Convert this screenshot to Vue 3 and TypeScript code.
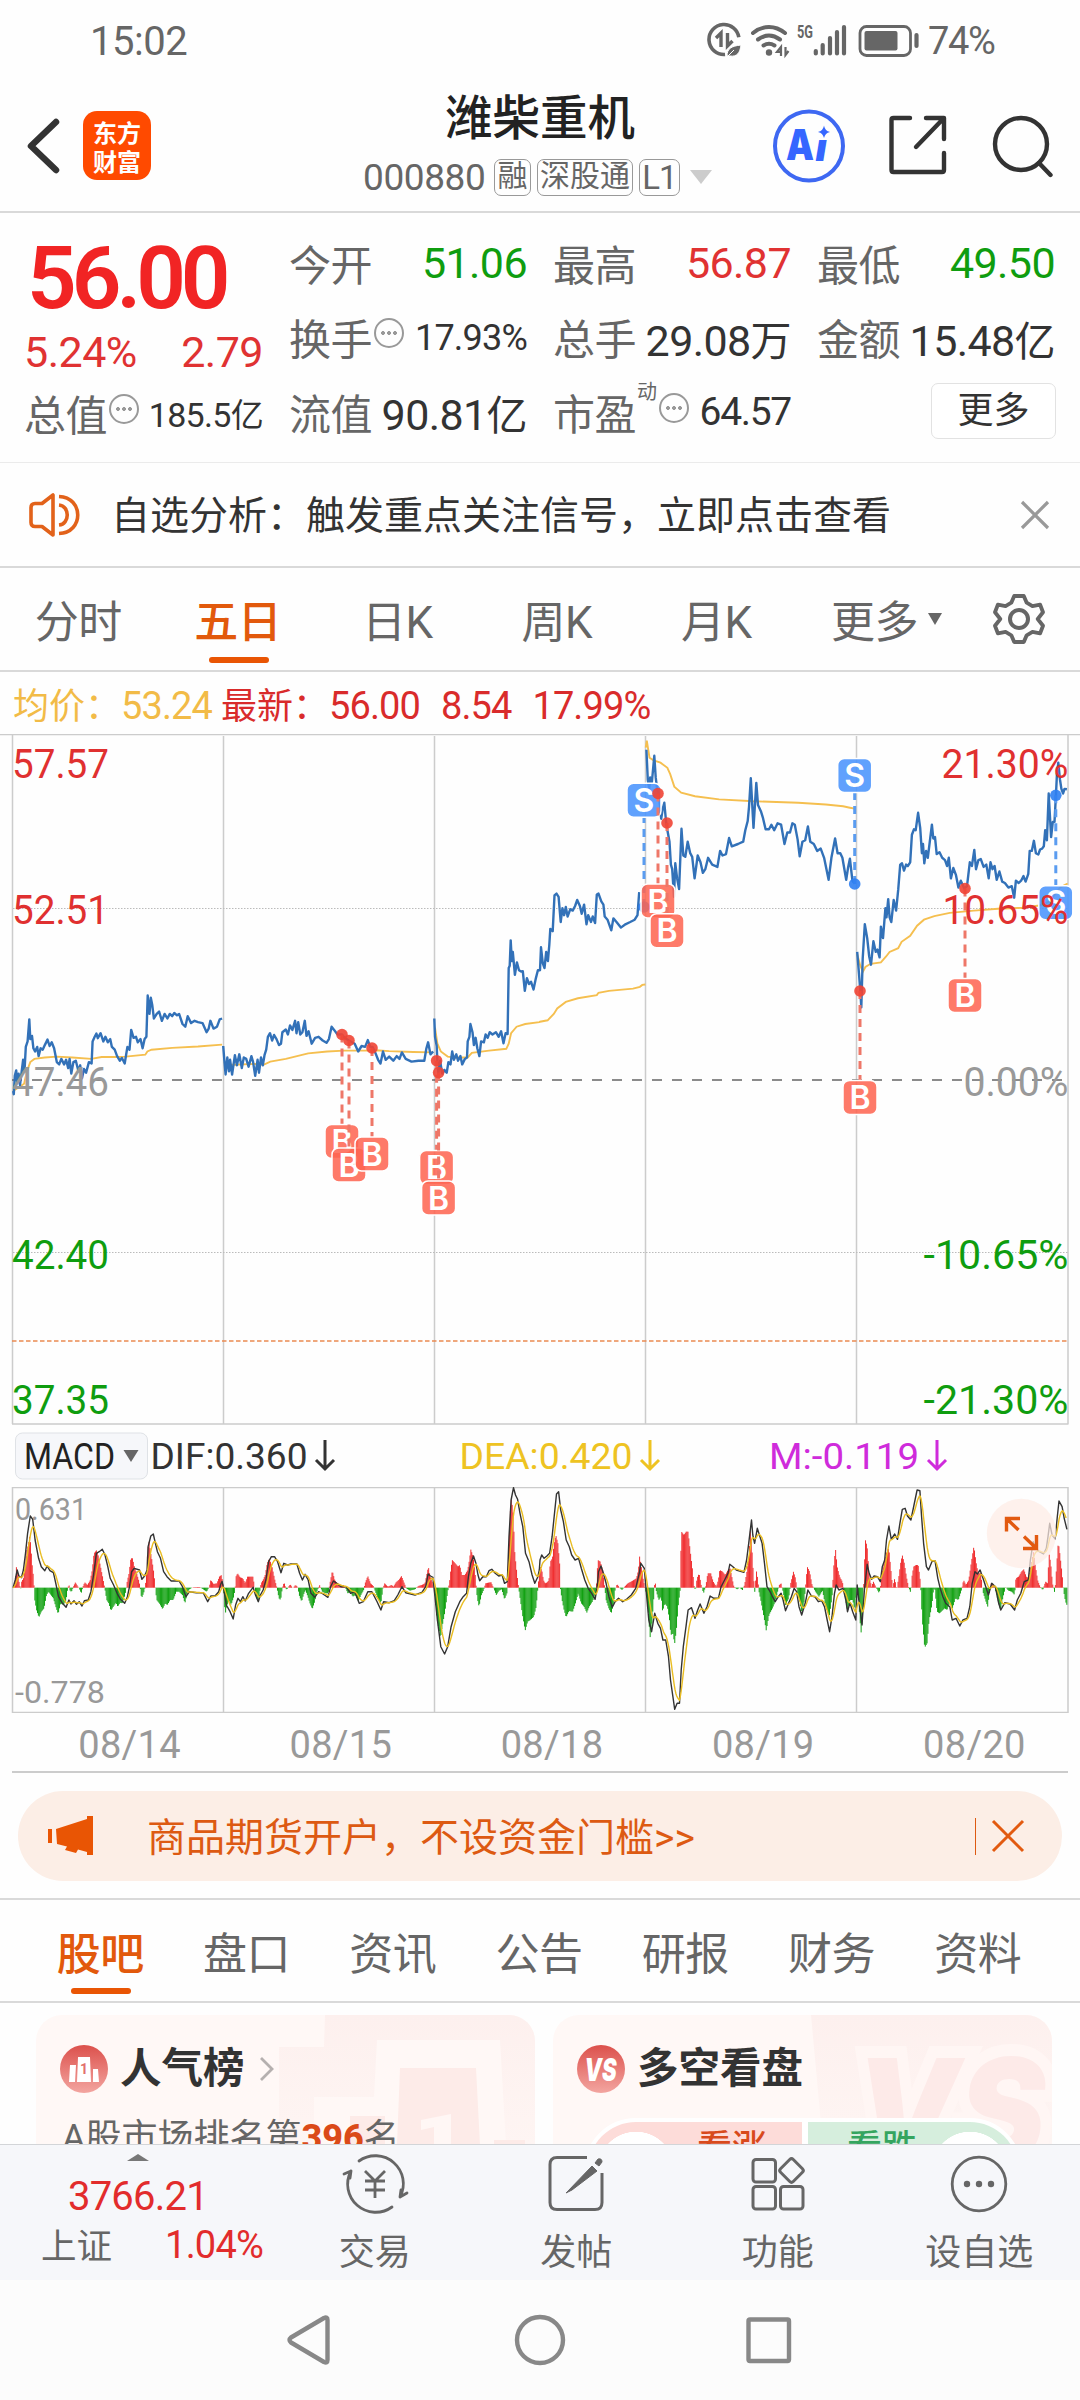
<script setup lang="ts">
type Pt = [number, number]
interface Plot { ox: number; oy: number; sx: number; sy: number }
interface Mark { kind: 'B' | 'S'; x: number; y: number; dot: number }

// Sample sheets are stored in plotter units; each half of the canvas has its own origin.
const priceL: Plot = { ox: 0, oy: -14, sx: 540 / 1568, sy: 720 / 1568 }
const priceR: Plot = { ...priceL, ox: 540 }
const macdL: Plot = { ox: 0, oy: -67, sx: 540 / 1568, sy: 1 / 3 }
const macdR: Plot = { ...macdL, ox: 540 }

const parse = (s: string, p: Plot): Pt[] =>
  s.trim().split(/\s+/).map((c) => {
    const [x, y] = c.split(',').map(Number)
    return [p.ox + x * p.sx, p.oy + y * p.sy] as Pt
  })
const line = (pts: Pt[]): string => pts.map(([x, y]) => `${x.toFixed(1)},${y.toFixed(1)}`).join(' ')

const price: string[] = [
  line(parse('38,808 40,815 43,775 47,763 50,790 54,770 58,795 62,770 67,740 71,765 75,712 80,700 85,652 88,695 93,688 97,715 102,722 108,712 112,732 118,715 124,718 130,708 138,696 144,710 150,702 157,715 165,745 172,750 178,738 186,750 192,740 198,758 202,738 207,770 213,745 220,742 228,765 233,752 238,780 244,760 250,768 258,745 266,748 269,700 275,690 280,683 284,693 292,682 300,700 306,690 313,702 320,695 325,712 333,718 340,732 348,742 354,736 362,748 370,712 376,718 381,675 388,692 395,690 400,702 408,695 414,715 420,695 425,690 429,600 434,640 438,605 442,620 447,650 455,640 462,635 470,655 478,640 486,650 493,640 500,645 506,638 514,643 520,640 530,662 538,668 545,645 555,660 565,655 575,658 588,660 600,680 606,672 611,655 620,672 630,668 638,652 645,650', priceL)),
  line(parse('648,710 652,745 655,772 660,735 665,765 668,740 674,772 682,730 688,752 695,728 702,758 708,735 715,738 722,755 730,732 735,745 741,775 748,740 752,768 758,735 763,752 768,730 773,718 778,690 784,682 790,698 796,686 803,695 810,708 816,705 820,680 830,674 836,685 842,665 849,675 857,655 861,682 866,658 872,685 878,680 885,655 890,688 896,678 905,705 915,692 925,690 937,698 948,703 955,695 963,668 970,675 980,685 993,685 1000,692 1013,698 1030,705 1040,722 1050,710 1060,712 1068,697 1075,712 1082,712 1090,725 1098,740 1105,748 1112,722 1120,740 1130,733 1142,742 1152,732 1160,738 1167,724 1178,738 1195,744 1215,742 1232,742 1238,715 1243,702 1250,728 1258,722', priceL)),
  line([
    ...parse('1261,650 1263,690 1268,710 1270,745 1273,770 1278,742 1284,770 1290,762 1297,768 1302,745 1308,750 1313,722 1318,740 1325,728 1330,742 1337,732 1342,750 1350,738 1356,735 1358,700 1363,690 1366,662 1372,680 1376,708 1381,692 1386,715 1392,732 1397,700 1405,702 1410,685 1416,692 1422,680 1430,685 1440,680 1448,690 1455,678 1462,704 1468,682 1474,684 1477,540 1480,535 1483,480 1486,525 1489,505 1495,555 1501,528 1507,545 1513,548 1518,547 1524,590 1530,562 1536,575 1542,570 1549,587 1556,562 1562,545 1566,545', priceL),
    ...parse('0,545 3,495 8,530 13,540 18,505 23,525 27,490 30,455 37,460 42,382 48,378 54,385 60,440 65,410 70,425 75,407 80,428 88,412 95,415 102,405 108,392 116,405 121,422 128,402 135,445 140,425 148,440 153,428 160,442 165,380 170,378 178,395 184,402 188,428 196,435 207,458 213,432 222,440 235,452 248,445 262,440 275,435 283,425 288,375', priceR),
  ]),
  line(parse('309,65 313,130 317,150 320,125 325,135 332,78 336,125 340,150 345,160 352,215 356,195 361,180 366,220 370,240 376,265 380,315 384,325 389,385 393,312 398,345 404,368 411,237 416,295 422,298 429,265 436,290 442,298 449,345 458,295 466,310 473,333 480,325 488,300 500,315 515,320 523,285 530,295 540,292 549,257 557,275 575,270 590,265 596,240 603,220 607,190 612,127 620,235 628,137 633,185 642,200 647,212 655,238 665,238 672,228 680,240 690,225 700,228 710,270 718,245 726,245 733,225 740,228 748,260 754,297 762,265 770,262 778,232 785,265 795,270 805,285 815,280 825,300 838,348 846,300 857,258 864,290 872,290 878,300 889,348 895,320 900,302 907,350 914,357', priceR)),
  line(parse('921,505 926,550 930,590 933,626 937,520 943,445 950,475 956,515 961,533 968,482 975,505 980,500 986,517 990,450 996,475 1003,410 1006,430 1011,390 1015,430 1020,440 1027,392 1034,415 1040,370 1046,315 1051,312 1057,328 1063,315 1068,318 1075,310 1080,250 1086,238 1091,240 1098,202 1104,235 1109,290 1112,270 1116,312 1121,285 1126,300 1132,265 1138,228 1142,258 1147,255 1152,292 1160,288 1168,300 1176,305 1182,318 1187,300 1193,345 1200,322 1208,338 1215,365 1222,350 1232,367 1240,362 1248,310 1254,318 1261,283 1266,325 1273,305 1280,303 1288,320 1296,315 1303,345 1308,310 1314,325 1320,318 1326,348 1334,330 1342,352 1350,355 1360,365 1370,362 1377,387 1382,350 1390,355 1397,350 1404,340 1410,352 1418,335 1422,285 1428,285 1434,263 1440,290 1447,293 1452,282 1458,280 1463,275 1467,240 1472,262 1477,160 1484,255 1489,222 1494,222 1498,165 1501,120 1505,93 1510,130 1514,150 1519,160 1523,150 1530,151', priceR)),
]

const average: string[] = [
  line(parse('38,808 55,800 70,792 78,765 88,745 100,738 130,735 165,733 210,735 265,738 295,734 340,734 365,733 422,729 428,722 440,718 500,714 575,711 645,707', priceL)),
  line(parse('650,745 662,750 680,751 740,749 765,751 785,744 830,738 895,726 950,722 1000,720 1060,720 1090,719 1130,721 1200,723 1256,724', priceL)),
  line([
    ...parse('1263,670 1270,705 1280,722 1300,733 1320,735 1358,735 1370,725 1420,720 1470,716 1477,705 1484,682 1500,668 1525,662 1566,658', priceL),
    ...parse('0,657 22,654 40,640 50,628 75,614 110,606 165,599 170,594 200,590 270,585 290,581 297,577 306,576', priceR),
  ]),
  line(parse('307,60 310,45 318,82 330,88 350,93 370,104 378,118 390,145 410,158 450,166 520,173 620,177 750,180 830,184 880,188 900,191 914,193', priceR)),
  line(parse('921,510 930,535 938,548 945,538 960,531 990,528 1005,515 1015,505 1040,497 1050,483 1075,470 1095,448 1115,435 1145,427 1190,420 1260,415 1330,411 1400,409 1450,404 1480,395 1495,380 1510,365 1532,356', priceR)),
]

const marks: Mark[] = [
  { kind: 'B', x: 342, y: 407.5, dot: 300.5 },
  { kind: 'B', x: 349, y: 431, dot: 306.5 },
  { kind: 'B', x: 372, y: 420, dot: 314 },
  { kind: 'B', x: 436.6, y: 433.6, dot: 326.7 },
  { kind: 'B', x: 438.6, y: 464, dot: 338.6 },
  { kind: 'S', x: 644, y: 66.3, dot: 173 },
  { kind: 'B', x: 658, y: 167, dot: 59.5 },
  { kind: 'B', x: 667, y: 196.7, dot: 89 },
  { kind: 'S', x: 854.7, y: 41.5, dot: 150 },
  { kind: 'B', x: 860, y: 363.4, dot: 257 },
  { kind: 'B', x: 965, y: 261.5, dot: 154.5 },
  { kind: 'S', x: 1055.8, y: 168.7, dot: 61.3 },
]
const markEdge = (m: Mark): number => (m.y > m.dot ? m.y - 17 : m.y + 17)

const axis = [
  { y: 44, left: '57.57', right: '21.30%', rw: 127, tone: 'up' },
  { y: 190, left: '52.51', right: '10.65%', rw: 126, tone: 'up' },
  { y: 362, left: '47.46', right: '0.00%', rw: 105, tone: 'flat' },
  { y: 534.5, left: '42.40', right: '-10.65%', rw: 145, tone: 'down' },
  { y: 680, left: '37.35', right: '-21.30%', rw: 145, tone: 'down' },
]
const dayLines = [223.5, 434.5, 645.5, 856.5]

// ---- MACD ----
const difPts: Pt[] = [
  ...parse('38,503 44,480 50,450 55,468 62,473 68,450 74,400 80,340 88,288 95,298 102,360 112,415 120,440 130,452 137,438 145,452 155,458 162,490 170,530 180,548 192,562 200,540 206,552 215,542 222,553 230,545 238,558 245,542 256,540 264,515 271,470 280,400 288,395 297,388 305,405 313,440 320,475 330,495 340,520 350,538 362,550 370,530 376,500 382,455 390,445 405,450 412,478 420,468 427,450 430,380 438,348 445,342 450,365 457,395 466,415 475,455 485,470 497,483 520,483 530,500 540,530 550,515 570,518 590,518 603,545 612,528 625,527 635,515 641,492 645,484 650,510 657,555 668,575 677,597 684,555 691,535 698,545 705,530 712,543 722,520 735,502 742,525 750,545 756,525 764,510 772,480 780,425 788,410 797,410 806,425 816,458 824,430 835,435 845,432 862,432 870,460 878,480 886,463 895,480 903,520 914,532 925,515 938,522 952,532 960,500 968,483 978,490 990,500 1005,500 1018,520 1030,515 1043,550 1055,545 1068,515 1080,515 1095,545 1106,570 1114,545 1130,548 1145,542 1155,525 1167,500 1178,518 1205,525 1225,517 1236,500 1243,462 1250,468 1257,472 1262,520 1270,600 1280,680 1291,702 1300,680 1310,620 1322,575 1335,545 1345,530 1355,520 1360,470 1367,430 1375,408 1382,430 1388,465 1393,482 1402,470 1412,470 1420,452 1428,448 1438,460 1448,468 1458,465 1465,490 1473,485 1478,350 1484,240 1491,203 1497,225 1503,238 1510,280 1518,320 1526,400 1536,425 1545,465 1553,490 1562,470 1566,450', macdL),
  ...parse('0,420 5,405 12,415 20,408 28,400 35,350 42,280 48,222 54,215 60,270 68,305 76,360 85,380 92,405 102,420 112,415 120,445 130,480 140,505 150,520 160,538 166,500 170,455 177,438 184,460 192,490 200,530 210,562 218,545 228,535 240,545 252,537 265,525 278,505 288,460 293,430 303,445 308,510 316,600 324,635 333,580 342,610 350,625 357,660 365,660 373,710 379,780 386,830 391,868 398,850 405,850 410,750 416,680 424,620 430,570 440,563 450,595 458,570 465,552 476,580 485,560 494,528 505,535 518,535 526,500 536,480 546,460 551,433 560,440 570,450 592,457 600,420 606,370 614,300 618,345 623,370 631,325 637,345 645,370 652,430 659,500 668,515 675,530 683,545 692,530 700,520 706,540 713,572 722,550 730,530 738,505 745,515 752,560 760,585 770,550 778,510 788,528 798,530 808,545 818,542 826,560 834,600 841,635 848,590 855,520 860,495 868,510 880,505 888,540 893,575 900,548 908,575 917,600 921,495 927,550 935,615 942,510 950,433 956,460 963,478 970,468 980,470 988,485 994,440 1001,420 1006,360 1013,318 1020,358 1030,342 1038,358 1045,310 1052,268 1060,265 1067,288 1077,300 1086,255 1095,210 1103,212 1108,290 1114,370 1122,440 1128,450 1138,425 1147,422 1155,475 1162,505 1170,530 1178,550 1190,560 1197,600 1208,595 1219,618 1228,600 1240,595 1248,560 1255,490 1263,455 1270,462 1278,450 1288,480 1302,525 1312,490 1322,500 1332,550 1338,570 1350,548 1365,552 1378,570 1386,540 1396,520 1406,485 1418,480 1424,420 1432,365 1440,385 1450,395 1462,402 1470,385 1475,350 1480,310 1487,345 1496,357 1502,290 1507,243 1516,260 1522,295 1530,328', macdR),
]
const histPts: Pt[] = [
  ...parse('40,503 44,480 48,438 52,465 56,490 60,508 63,485 68,475 72,450 77,395 82,375 86,350 89,370 93,430 98,480 99,503 101,540 106,570 113,592 120,575 128,565 135,525 141,515 148,525 155,535 162,560 169,582 176,550 184,555 192,540 196,510 200,492 204,515 209,513 213,500 219,487 225,498 229,503 236,520 241,500 246,487 254,495 262,480 268,450 273,400 281,390 286,410 292,440 298,470 304,503 310,540 316,550 322,572 329,560 337,548 342,560 349,548 356,550 363,525 367,503 370,480 374,465 380,415 385,415 390,440 397,460 404,485 407,503 411,535 417,520 421,503 424,480 429,390 433,365 437,395 442,425 447,460 451,503 455,540 463,550 472,567 480,550 486,555 494,540 503,540 512,515 520,515 530,525 537,550 544,518 550,508 560,502 580,501 590,508 600,515 608,500 612,480 620,492 630,490 637,470 643,465 647,490 649,503 654,585 657,565 664,540 671,555 679,530 683,503 685,470 690,460 697,472 705,475 712,490 719,470 735,470 738,495 743,525 750,545 755,510 758,490 764,480 770,465 776,430 782,415 790,440 797,475 804,503 810,535 815,540 820,503 825,487 832,510 838,500 843,493 850,505 858,495 864,500 870,530 876,545 881,525 887,510 894,530 900,550 907,567 914,545 920,515 928,495 936,515 945,520 953,520 958,490 965,452 972,480 980,490 990,495 998,495 1004,505 1010,520 1018,515 1024,530 1032,525 1040,545 1048,525 1056,510 1060,490 1068,468 1076,490 1084,498 1092,520 1100,540 1106,550 1112,505 1117,490 1126,500 1137,495 1143,500 1150,487 1158,480 1166,468 1174,490 1180,505 1190,512 1205,508 1215,498 1225,495 1234,490 1239,465 1244,440 1249,470 1255,485 1260,503 1263,530 1268,590 1274,625 1279,655 1284,620 1292,575 1298,530 1302,503 1305,490 1309,450 1313,420 1322,430 1330,440 1335,435 1341,465 1350,465 1358,450 1363,420 1367,388 1374,410 1380,465 1383,503 1386,535 1391,560 1398,525 1405,508 1410,490 1418,488 1426,487 1433,503 1441,525 1449,512 1457,508 1465,538 1472,520 1475,460 1480,300 1485,235 1490,280 1495,400 1502,470 1506,503 1511,540 1518,590 1525,632 1532,605 1540,600 1550,590 1557,560 1562,503 1566,460', macdL),
  ...parse('1,440 6,455 10,480 15,490 20,488 26,480 30,425 36,415 41,370 46,345 52,370 57,430 59,503 64,540 70,570 76,592 84,573 95,575 103,550 111,520 120,550 128,560 136,578 143,560 152,545 162,520 165,480 168,420 175,425 182,450 188,503 192,540 200,565 207,580 214,550 218,510 224,492 230,502 238,510 246,500 255,490 268,483 280,475 286,450 289,408 295,445 300,480 305,503 310,530 316,590 319,657 324,625 330,540 332,503 334,480 338,515 345,540 352,530 356,575 362,550 370,560 376,600 380,645 386,640 391,672 396,630 402,550 407,510 409,400 411,335 418,345 424,335 430,335 436,390 443,450 448,503 452,510 456,475 462,460 468,495 475,520 482,495 487,460 496,460 503,485 512,500 518,480 522,450 530,455 538,465 546,450 552,445 558,475 563,500 572,508 580,503 588,510 594,495 600,460 606,420 611,330 615,380 620,470 624,520 628,450 632,475 636,515 642,545 650,590 657,632 665,585 675,565 683,545 690,515 695,495 700,490 706,515 713,555 722,535 728,490 736,455 742,475 748,520 754,545 760,580 767,545 772,490 776,440 783,455 790,495 800,515 810,530 820,512 830,560 840,590 848,530 853,440 858,385 863,440 870,470 878,485 884,515 893,575 900,540 908,540 914,570 920,500 925,540 929,600 933,643 938,570 941,460 945,360 950,380 956,470 963,500 968,485 975,500 985,520 990,490 994,450 1001,425 1008,390 1013,385 1018,440 1024,503 1030,475 1036,510 1042,470 1047,430 1052,405 1058,430 1064,470 1070,500 1077,520 1080,470 1085,440 1092,435 1098,435 1103,470 1106,510 1110,600 1117,683 1124,670 1130,600 1138,555 1143,505 1147,510 1153,575 1160,580 1175,565 1182,570 1190,548 1198,565 1206,535 1215,540 1224,510 1230,480 1237,495 1245,480 1252,430 1260,378 1266,425 1272,460 1280,460 1286,515 1295,545 1300,560 1305,520 1310,490 1318,495 1326,525 1337,570 1345,530 1352,500 1360,512 1370,515 1378,525 1382,475 1390,470 1398,455 1405,448 1412,470 1420,475 1427,430 1433,395 1438,435 1445,480 1452,500 1460,510 1468,485 1474,490 1478,400 1483,430 1488,490 1495,520 1500,440 1505,365 1510,405 1516,460 1520,510 1526,545 1532,560', macdR),
]

const STEP = 0.879
function resample(pts: Pt[]): Pt[] {
  const out: Pt[] = []
  let i = 0
  for (let x = pts[0][0]; x <= pts[pts.length - 1][0]; x += STEP) {
    while (i < pts.length - 2 && pts[i + 1][0] < x) i++
    const [x0, y0] = pts[i]
    const [x1, y1] = pts[i + 1]
    out.push([x, y0 + ((y1 - y0) * (x - x0)) / (x1 - x0 || 1)])
  }
  return out
}
const dif = line(difPts)
// Signal line: exponential average of DIF.
let ema = difPts[0][1]
const dea = line(resample(difPts).map(([x, y]) => {
  ema += (y - ema) * 0.23
  return [x, ema] as Pt
}))
const ZERO = 100.7
const bars = resample(histPts)
const barPath = (up: boolean): string =>
  bars.filter(([, y]) => (up ? y < ZERO : y > ZERO)).map(([x, y]) => `M${x.toFixed(2)} ${ZERO}V${y.toFixed(1)}`).join('')
const redBars = barPath(true)
const greenBars = barPath(false)

const dates = ['08/14', '08/15', '08/18', '08/19', '08/20']
const infoTabs = ['股吧', '盘口', '资讯', '公告', '研报', '财务', '资料']
</script>

<template>
  <div class="screen">
    <header class="status">
      <span class="clock">15:02</span>
      <svg width="212" height="50" viewBox="706 15 212 50" fill="none" stroke="#666">
        <circle cx="723" cy="38.500" r="15" stroke-width="3.600" stroke-dasharray="69 26" transform="rotate(86 723 38.500)" />
        <path d="M720 46V32l-5 5M726.500 32v13l5-5" stroke-width="3.400" />
        <path d="M726 55c0-7 4-10 14-11-1 8-4 12-11 11zM727 55l6-6" fill="#666" stroke="#fff" stroke-width="1" />
        <path d="M752 32c10-8 22-8 32 0M757 38.500c7-5 15-5 22 0M762.500 44.500c4-2.500 7-2.500 11 0" stroke-width="4" stroke-linecap="round" />
        <circle cx="768" cy="51.500" r="3.200" fill="#666" stroke="none" />
        <path d="M780 55v-9l-4 5h4M784.500 46v8l3-4" stroke-width="2.200" />
        <text x="796" y="36.500" textLength="16" lengthAdjust="spacingAndGlyphs" class="net">5G</text>
        <path d="M814.800 50v2.500M821.700 44v8.500M829 37v15.500M836 31v21.500M843 26v26.500" stroke-width="4.200" stroke-linecap="round" />
        <rect x="859" y="25.500" width="50.500" height="29" rx="6.500" stroke-width="2.800" />
        <rect x="863.500" y="30" width="33" height="19.500" rx="2" fill="#666" stroke="none" />
        <path d="M915.500 34v11" stroke-width="4.200" stroke-linecap="round" />
      </svg>
      <span class="battery">74%</span>
    </header>

    <nav class="topbar">
      <svg class="back" width="40" height="60" viewBox="0 0 40 60"><path d="M32 6 7 30l25 24" fill="none" stroke="#333" stroke-width="6.500" stroke-linecap="round" stroke-linejoin="round" /></svg>
      <div class="logo"><span>东方</span><span>财富</span></div>
      <div class="name">
        <h1>潍柴重机</h1>
        <div class="code">
          <span class="num">000880</span><b>融</b><b>深股通</b><b>L1</b>
          <i class="caret"></i>
        </div>
      </div>
      <svg class="ai" width="74" height="76" viewBox="0 0 74 76">
        <ellipse cx="37" cy="38" rx="34" ry="34.500" fill="none" stroke="#3e68f2" stroke-width="4" />
        <text x="14" y="51.500" textLength="28" lengthAdjust="spacingAndGlyphs">A</text>
        <text x="43.500" y="53" class="ii">ı</text>
        <path d="M52 17.500c1 4 2.500 5.500 6 6.500-3.500 1-5 2.500-6 6-1-3.500-2.500-5-6-6 3.500-1 5-2.500 6-6.500z" fill="#3566ff" />
      </svg>
      <svg class="share" width="60" height="62" viewBox="0 0 60 62" fill="none" stroke="#333" stroke-width="4.400" stroke-linecap="round" stroke-linejoin="round">
        <path d="M22 3H5.500Q3.500 3 3.500 5v50q0 2 2 2H54q2 0 2-2V38M38 3h18v21M55 4 28 32" />
      </svg>
      <svg class="search" width="64" height="64" viewBox="0 0 64 64" fill="none" stroke="#333" stroke-width="4.400" stroke-linecap="round">
        <circle cx="30" cy="30" r="26" /><path d="m48 49 11.500 12" />
      </svg>
    </nav>

    <section class="quote">
      <div class="main">
        <div class="last">56.00</div>
        <div class="chg"><span>5.24%</span><span>2.79</span></div>
        <div class="cell"><label>总值</label><i class="tip"></i><em class="s">185.5<small>亿</small></em></div>
      </div>
      <div class="grid">
        <div class="cell"><label>今开</label><em class="down">51.06</em></div>
        <div class="cell"><label>最高</label><em class="up">56.87</em></div>
        <div class="cell"><label>最低</label><em class="down">49.50</em></div>
        <div class="cell"><label>换手</label><i class="tip"></i><em class="m">17.93%</em></div>
        <div class="cell"><label>总手</label><em>29.08<small>万</small></em></div>
        <div class="cell"><label>金额</label><em>15.48<small>亿</small></em></div>
        <div class="cell"><label>流值</label><em>90.81<small>亿</small></em></div>
        <div class="cell"><label>市盈</label><sup>动</sup><i class="tip"></i><em class="l">64.57</em></div>
        <div class="cell"><button>更多</button></div>
      </div>
    </section>

    <section class="notice">
      <svg width="54" height="46" viewBox="0 0 54 46" fill="none" stroke="#e2621a" stroke-width="3.600">
        <path d="M26 3v40L15 34.500H8q-4 0-4-4v-15q0-4 4-4h7z" stroke-linejoin="round" />
        <path d="M32 13c11 1 11 19 0 20M32 4.500c25 1 25 36 0 37" />
      </svg>
      <p>自选分析：触发重点关注信号，立即点击查看</p>
      <svg width="30" height="30" viewBox="0 0 30 30"><path d="m2 2 26 26M28 2 2 28" stroke="#999" stroke-width="3.200" /></svg>
    </section>

    <nav class="periods">
      <span>分时</span><span class="on">五日</span><span>日K</span><span>周K</span><span>月K</span>
      <span class="more">更多<i></i></span>
      <svg width="52" height="54" viewBox="-26 -27 52 54" fill="none" stroke="#666" stroke-width="4">
        <path d="M-5-24H5L8-17 14-13.500 22-15 25-7 19.500 0 25 7 22 15 14 13.500 8 17 5 24H-5L-8 17-14 13.500-22 15-25 7-19.500 0-25-7-22-15-14-13.500-8-17z" transform="scale(.96)" stroke-linejoin="round" />
        <circle r="9" />
      </svg>
    </nav>

    <div class="legend"><span class="avg">均价：<b>53.24</b></span><span class="new">最新：<b>56.00</b><b>8.54</b><b>17.99%</b></span></div>

    <svg class="chart" width="1080" height="691" viewBox="0 0 1080 691">
      <path d="M12.500 0V690M1068 0V690M12 690H1068.500" class="frame" />
      <path d="M0 .5H1080" class="frame" />
      <path v-for="x in dayLines" :key="x" :d="`M${x} 2V690`" class="frame" />
      <path d="M13 174.500H1068M13 518.500H1068" stroke="#bbb" stroke-width="1.200" stroke-dasharray="1.500 1.500" />
      <path d="M12 346H1068" stroke="#666" stroke-width="1.700" stroke-dasharray="10 10" />
      <path d="M12 607H1068" stroke="#ea8a52" stroke-width="1.500" stroke-dasharray="4.500 2.500" />
      <polyline v-for="(p, i) in average" :key="'a' + i" :points="p" fill="none" stroke="#f5bf4f" stroke-width="1.900" />
      <polyline v-for="(p, i) in price" :key="'p' + i" :points="p" fill="none" stroke="#3271b8" stroke-width="2.400" stroke-linejoin="round" />
      <g v-for="(m, i) in marks" :key="'m' + i" :class="['mark', m.kind]">
        <path :d="`M${m.x} ${m.dot}V${markEdge(m)}`" class="stem" />
        <circle :cx="m.x" :cy="m.dot" r="5.800" />
        <rect :x="m.x - 17" :y="m.y - 17" width="34" height="34" rx="6.500" />
        <text :x="m.x" :y="m.y + 11.500">{{ m.kind }}</text>
      </g>
      <g v-for="a in axis" :key="a.left" :class="['axis', a.tone]">
        <text x="12" :y="a.y" textLength="97" lengthAdjust="spacingAndGlyphs">{{ a.left }}</text>
        <text :x="1068.500 - a.rw" :y="a.y" :textLength="a.rw" lengthAdjust="spacingAndGlyphs">{{ a.right }}</text>
      </g>
    </svg>

    <svg class="indicator" width="1080" height="62" viewBox="0 0 1080 62">
      <rect x="15.500" y="8" width="132" height="46" rx="7" fill="#f6f7fa" stroke="#dfe2e6" />
      <path d="M123.500 25h15l-7.500 12z" fill="#666" />
      <text x="24" y="44" textLength="91" lengthAdjust="spacingAndGlyphs" fill="#222">MACD</text>
      <text x="150.500" y="44" textLength="157" lengthAdjust="spacingAndGlyphs" fill="#333">DIF:0.360</text>
      <text x="459.500" y="44" textLength="173" lengthAdjust="spacingAndGlyphs" fill="#eec322">DEA:0.420</text>
      <text x="769" y="44" textLength="150" lengthAdjust="spacingAndGlyphs" fill="#cf2bdb">M:-0.119</text>
      <g fill="none" stroke-width="3">
        <path d="M325 15v29m-9-9 9 9 9-9" stroke="#333" />
        <path d="M650 15v29m-9-9 9 9 9-9" stroke="#eec322" />
        <path d="M937 15v29m-9-9 9 9 9-9" stroke="#cf2bdb" />
      </g>
    </svg>

    <svg class="macd" width="1080" height="226" viewBox="0 0 1080 226">
      <path d="M12.500 .5H1068V225.500H12.500z" class="frame" />
      <path v-for="x in dayLines" :key="x" :d="`M${x} 1V225`" class="frame" />
      <text x="15" y="33" textLength="72" lengthAdjust="spacingAndGlyphs">0.631</text>
      <text x="15" y="216" textLength="90" lengthAdjust="spacingAndGlyphs">-0.778</text>
      <path :d="redBars" stroke="#f0292b" stroke-width=".98" />
      <path :d="greenBars" stroke="#0c9f0c" stroke-width=".98" />
      <polyline :points="dif" fill="none" stroke="#333" stroke-width="1.400" stroke-linejoin="round" />
      <polyline :points="dea" fill="none" stroke="#e9bd22" stroke-width="1.400" />
      <circle cx="1021.500" cy="46.500" r="34.700" fill="#fdece4" opacity=".72" />
      <path d="M1006.500 44.500v-13h13.500M1006.500 31.500l12 11.500M1036.500 48v13.500h-13.500M1036.500 61.500l-12.500-12" fill="none" stroke="#e25a10" stroke-width="3.400" />
    </svg>

    <div class="dates"><span v-for="d in dates" :key="d">{{ d }}</span></div>

    <div class="promo">
      <svg width="46" height="40" viewBox="0 0 46 40" fill="#e95504"><path d="M0 13h4v14H0zM8 13 39 3V0h6v39h-6v-3l-9-2.500-2 3.500-11-3 2-3.500L9 28z" /></svg>
      <p>商品期货开户，不设资金门槛&gt;&gt;</p>
      <i></i>
      <svg width="34" height="34" viewBox="0 0 34 34"><path d="m2 2 30 30M32 2 2 32" stroke="#e25a10" stroke-width="3" /></svg>
    </div>

    <nav class="info"><span v-for="(t, i) in infoTabs" :key="t" :class="{ on: i === 0 }">{{ t }}</span></nav>

    <section class="cards">
      <article class="card">
        <svg class="deco" width="500" height="130" viewBox="0 0 500 130">
          <defs><linearGradient id="fade" x1="0" y1="0" x2="0" y2="1"><stop offset="0" stop-color="#fdf0ee" /><stop offset="1" stop-color="#fef5f3" /></linearGradient></defs>
          <path d="M289 0H500V130H243V32H288z" fill="url(#fade)" />
          <path d="M341 25H464L470 130H278V82H338z" fill="#fff8f6" />
          <path d="M364 53H440L444 130H361zM314 101H349V130H314zM458 125h31v5h-31z" fill="#fdebe8" />
          <path d="M385 105 415 99V130H398V112L385 115z" fill="#fff7f5" />
        </svg>
        <div class="head">
          <svg width="50" height="50" viewBox="0 0 50 50">
            <defs><linearGradient id="badge" x1="0" y1="0" x2="0" y2="1"><stop offset="0" stop-color="#dc514c" /><stop offset="1" stop-color="#f3a5a0" /></linearGradient></defs>
            <circle cx="25" cy="25" r="24" fill="url(#badge)" />
            <path d="M11 21h6l-1 17h-6zM19 13h12l1 25H18zM34 25h5l1 13h-6z" fill="#fff" />
            <text x="25" y="30" class="one">1</text>
          </svg>
          <h2>人气榜</h2>
          <svg class="go" width="16" height="26" viewBox="0 0 16 26"><path d="m2 2 11 11L2 24" fill="none" stroke="#b5b0af" stroke-width="2.800" /></svg>
        </div>
        <p class="rank">A股市场排名第<strong>396</strong>名</p>
      </article>
      <article class="card">
        <svg class="deco" width="500" height="130" viewBox="0 0 500 130">
          <path d="M258 0H500V130H270z" fill="url(#fade)" />
          <text x="302" y="146" class="wm" textLength="190" lengthAdjust="spacingAndGlyphs">VS</text>
        </svg>
        <div class="head">
          <svg width="50" height="50" viewBox="0 0 50 50">
            <circle cx="25" cy="25" r="24" fill="url(#badge)" />
            <text x="24.500" y="37" class="vs" textLength="32" lengthAdjust="spacingAndGlyphs">VS</text>
          </svg>
          <h2>多空看盘</h2>
        </div>
        <div class="vote"><span class="bull">看涨</span><span class="bear">看跌</span></div>
      </article>
    </section>

    <footer class="dock">
      <div class="index">
        <i></i>
        <div class="pt">3766.21</div>
        <div class="row"><span>上证</span><b>1.04%</b></div>
      </div>
      <div class="item">
        <svg width="68" height="62" viewBox="-34 -31 68 62" fill="none" stroke="#666" stroke-width="2.800" stroke-linecap="round" stroke-linejoin="round">
          <path d="M-16-23A28 28 0 0 1 25 13l7-4M25 13l1-7M17 23A28 28 0 0 1-24-13l-7 3M-24-13l-1 7" />
          <path d="M-10-13 0-3 10-13M0-3v17M-10-3h20M-10 6h20" stroke-linecap="butt" />
        </svg>交易
      </div>
      <div class="item">
        <svg width="60" height="62" viewBox="-30 -31 60 62" fill="none" stroke="#666" stroke-width="3">
          <path d="M11-26.500H-19q-7 0-7 7v38q0 7 7 7h38q7 0 7-7V-11" />
          <path d="M-8 7 16-18l5 5L-4 6l-6 3zM19-21l3-4q4-1 4 3l-3 4z" fill="#666" stroke="#666" stroke-width="1" />
        </svg>发帖
      </div>
      <div class="item">
        <svg width="60" height="62" viewBox="-30 -31 60 62" fill="none" stroke="#666" stroke-width="3">
          <rect x="-25" y="-24.500" width="22.500" height="22.500" rx="3" /><rect x="-25" y="2.500" width="22.500" height="22.500" rx="3" /><rect x="2.500" y="2.500" width="22.500" height="22.500" rx="3" /><rect x="4.500" y="-22.500" width="18" height="18" rx="2.500" transform="rotate(45 13.500 -13.500)" />
        </svg>功能
      </div>
      <div class="item">
        <svg width="60" height="62" viewBox="-30 -31 60 62" fill="#666">
          <circle r="26.800" fill="none" stroke="#666" stroke-width="2.800" /><circle cx="-12" r="3.200" /><circle r="3.200" /><circle cx="12" r="3.200" />
        </svg>设自选
      </div>
    </footer>

    <div class="sysnav">
      <svg width="1080" height="120" viewBox="0 0 1080 120" fill="none" stroke="#888" stroke-width="4.400" stroke-linejoin="round">
        <path d="M291 57.500 324 38q3.500-1.500 3.500 2v40q0 3.500-3.500 2L291 62.500q-3-2.500 0-5z" /><circle cx="540" cy="60" r="23" /><rect x="748.500" y="39.500" width="40.500" height="41.500" rx="1.500" />
      </svg>
    </div>
  </div>
</template>

<style>
body { margin: 0; background: #fdfdfd; }
</style>

<style scoped>
.screen { width: 1080px; height: 2400px; overflow: hidden; display: flex; flex-direction: column; background: #fefefe; color: #333; font-family: Roboto, "Noto Sans CJK SC", sans-serif; }
.screen > * { box-sizing: border-box; flex: none; }
svg { display: block; flex: none; }
h1, h2, p { margin: 0; font-weight: 400; }
i, em { font-style: normal; }

.status { height: 80px; display: flex; align-items: center; padding: 2px 83px 0 90px; color: #666; }
.clock { font-size: 40px; letter-spacing: -0.5px; }
.status svg { margin-left: auto; margin-right: 9px; }
.net { font-size: 18px; font-weight: 700; fill: #666; stroke: none; }
.battery { font-size: 38px; letter-spacing: -1.3px; width: 69px; white-space: nowrap; }

.topbar { height: 133px; border-bottom: 2px solid #d9d9d9; display: flex; align-items: center; padding: 0 25px 0 24px; }
.back { margin-right: 19px; }
.logo { width: 68px; height: 69px; border-radius: 14px; background: #ff4a00; color: #fff; font: 700 24px/29px "Noto Sans CJK SC", sans-serif; display: flex; flex-direction: column; align-items: center; justify-content: center; }
.name { flex: 1; width: 0; padding-left: 212px; }
.name h1 { font-size: 47.500px; line-height: 58px; color: #222; font-weight: 500; margin: 3px 0 0 82px; }
.code { display: flex; align-items: center; color: #666; height: 54px; white-space: nowrap; margin-top: 2px; }
.code .num { font-size: 37px; letter-spacing: -0.4px; width: 131px; flex: none; }
.code b { box-sizing: border-box; height: 37px; border: 1.500px solid #999; border-radius: 7px; font-weight: 400; font-size: 30px; line-height: 32px; margin-right: 6px; width: 37px; flex: none; text-align: center; display: flex; justify-content: center; }
.code b:nth-of-type(2) { width: 96px; }
.code b:nth-of-type(3) { width: 41px; font-size: 33px; letter-spacing: -1px; line-height: 35px; }
.caret { border: 11px solid transparent; border-top: 14px solid #ccc; border-bottom: 0; margin-left: 4px; }
.ai text { font: 900 43px Inter, sans-serif; fill: #3566ff; }
.ai .ii { font: italic 900 38px Inter, sans-serif; }
.ai { margin-right: 42px; }
.share { margin-right: 43px; }

.quote { height: 249px; padding: 12px 24px 0 24px; display: flex; gap: 26px; }
.main { width: 239px; }
.last { height: 103px; line-height: 106px; font-size: 87px; font-weight: 600; letter-spacing: -5px; color: #f12424; white-space: nowrap; padding-left: 3px; }
.chg { height: 46px; line-height: 48px; font-size: 43px; letter-spacing: -0.5px; color: #e03232; display: flex; justify-content: space-between; }
.main .cell { height: 76px; }
.grid { width: 767px; display: grid; grid-template-columns: repeat(3, 238px); grid-auto-rows: 74.500px; column-gap: 26px; }
.cell { display: flex; align-items: center; white-space: nowrap; position: relative; }
.cell label { font-size: 42px; color: #666; letter-spacing: -0.5px; }
.cell em { margin-left: auto; font-size: 43px; letter-spacing: -0.6px; padding-top: 2px; }
.cell em small { font-size: 41px; }
.cell em.s { font-size: 34px; letter-spacing: -0.7px; }
.cell em.s small { font-size: 33px; }
.cell em.m { font-size: 36px; letter-spacing: -0.8px; }
.cell em.l { font-size: 39px; letter-spacing: -1.300px; }
.cell em.up { color: #e03232; }
.cell em.down { color: #0f9d0f; }
.cell sup { font-size: 20px; color: #666; margin: -38px 0 0 1px; line-height: 20px; }
.tip { box-sizing: border-box; width: 30px; height: 30px; border: 2px solid #999; border-radius: 50%; margin: -7px 0 0 2px; background: radial-gradient(circle at 7px 13px, #999 1.600px, transparent 2.200px), radial-gradient(circle at 13px 13px, #999 1.600px, transparent 2.200px), radial-gradient(circle at 19px 13px, #999 1.600px, transparent 2.200px); }
button { margin: 0 -1px 0 auto; box-sizing: border-box; width: 125px; height: 56px; border: 1.500px solid #e2e2e2; border-radius: 7px; background: #fff; color: #333; font: 36px/50px Roboto, "Noto Sans CJK SC", sans-serif; padding: 0; }

.notice { height: 106px; border-top: 1px solid #ebebeb; border-bottom: 2px solid #d9d9d9; display: flex; align-items: center; padding: 0 30px 0 27px; }
.notice p { flex: 1; font-size: 39px; padding: 0 0 5px 30px; }

.periods { height: 104px; border-bottom: 2px solid #d9d9d9; display: flex; align-items: center; font-size: 44px; color: #666; padding: 0 35px 0 0; }
.periods span { width: 159.500px; text-align: center; position: relative; letter-spacing: -0.6px; left: -1.500px; }
.periods .more { width: auto; margin-left: 35px; display: flex; align-items: center; }
.periods .more i { border: 7.500px solid transparent; border-top: 12px solid #666; border-bottom: 0; margin-left: 10px; }
.periods svg { margin-left: auto; margin-top: -1px; }
.on { color: #e2590c; font-weight: 500; }
.periods .on::after, .info .on::after { content: ""; position: absolute; left: 50%; margin-left: -29px; bottom: -12px; width: 60px; height: 6px; border-radius: 3px; background: #e95504; }
.info .on::after { bottom: -11px; }

.legend { height: 62px; display: flex; align-items: center; padding-left: 13px; font-size: 36px; padding-bottom: 1px; }
.legend b { font-weight: 400; font-size: 38px; letter-spacing: -0.9px; }
.avg { color: #f2bb47; margin-right: 9px; }
.new { color: #d92b2b; }
.new b + b { margin-left: 21px; }

.frame { fill: none; stroke: #ccc; stroke-width: 1.500; }
.axis text { font-size: 40px; }
.axis.up { fill: #e03030; }
.axis.flat { fill: #999; }
.axis.down { fill: #0f9d0f; }
.mark text { font: 600 32px Inter, sans-serif; fill: #fff; text-anchor: middle; }
.stem { stroke-width: 3; stroke-dasharray: 8 6; }
.mark rect { stroke: #fff; stroke-width: 1.500; }
.B rect { fill: #fe6450; fill-opacity: .86; }
.B circle { fill: #f04434; fill-opacity: .9; }
.B .stem { stroke: #ee7768; }
.S rect { fill: #4a94fd; fill-opacity: .88; }
.S circle { fill: #2f7ff2; fill-opacity: .9; }
.S .stem { stroke: #5a9cf0; }
.indicator text { font-size: 37px; }
.macd text { font-size: 31px; fill: #999; }

.dates { height: 60px; margin: 0 12px; border-bottom: 2px solid #ccc; display: flex; align-items: center; color: #999; font-size: 38px; }
.dates span { flex: 1; text-align: center; padding-left: 24px; padding-top: 6px; letter-spacing: 0.3px; }

.promo { height: 90px; margin: 18px 18px 17px; border-radius: 45px; background: #fceee6; display: flex; align-items: center; padding: 0 37px 0 30px; color: #dd5a12; }
.promo p { font-size: 39px; padding: 0 0 4px 53px; flex: 1; }
.promo i { width: 1.500px; height: 37px; background: #dd5a12; margin-right: 15px; }

.info { height: 105px; border-top: 2px solid #d9d9d9; border-bottom: 2px solid #d9d9d9; display: flex; align-items: center; padding: 0 29px 0 27px; font-size: 44px; color: #666; }
.info span { flex: 1; text-align: center; position: relative; letter-spacing: -0.5px; }

.cards { height: 141px; overflow: hidden; padding: 12px 27px 0 36px; display: flex; gap: 18px; }
.card { width: 499px; height: 260px; border-radius: 26px; background: #fff8f6; position: relative; overflow: hidden; }
.deco { position: absolute; left: 0; top: 0; }
.head { position: relative; display: flex; align-items: center; height: 58px; padding: 25px 0 0 23px; }
.head h2 { font-size: 41.500px; line-height: 50px; font-weight: 700; color: #333; margin-left: 11px; }
.go { margin: 0 0 0 14px; }
.one { font: 700 14px Roboto, sans-serif; fill: #e2716c; text-anchor: middle; }
.vs { font: italic 900 32px Inter, sans-serif; fill: #fff; text-anchor: middle; }
.wm { font: italic 900 142px Inter, sans-serif; fill: #fdeae8; stroke: #fff6f4; stroke-width: 24px; paint-order: stroke; }
.rank { position: relative; font-size: 36px; line-height: 40px; color: #666; padding: 20px 0 0 26px; }
.rank strong { color: #db4a18; font-weight: 800; }
.vote { position: relative; margin: 20px 30px 0 31px; height: 96px; border: 4px solid #fff; border-radius: 52px; display: flex; gap: 6px; background: #fff; overflow: hidden; font-size: 35px; line-height: 38px; font-weight: 500; }
.vote span { box-sizing: border-box; padding-top: 8px; }
.bull { width: 214px; background: radial-gradient(circle at 48px 48px, #fff 38px, #fddcd9 38.500px); color: #d84a1c; padding-left: 109px; }
.bear { flex: 1; background: radial-gradient(circle at calc(100% - 48px) 48px, #fff 38px, #d6eedd 38.500px); color: #35a55f; padding-left: 39px; }

.dock { height: 136px; border-top: 1.500px solid #d3d5d8; background: #f6f7fa; display: flex; position: relative; }
.index { width: 274px; position: relative; color: #e22c2c; }
.index i { position: absolute; left: 127px; top: 9px; border: 11px solid transparent; border-bottom: 7px solid #777; border-top: 0; }
.pt { font-size: 40px; line-height: 46px; padding: 29px 0 0 68px; letter-spacing: -0.8px; }
.row { display: flex; justify-content: space-between; align-items: center; padding: 0 11px 0 41px; height: 50px; }
.row span { font-size: 35.500px; color: #666; padding-bottom: 4px; }
.row b { font-weight: 400; font-size: 38px; letter-spacing: -0.8px; }
.item { width: 201.500px; display: flex; flex-direction: column; align-items: center; color: #666; font-size: 36px; line-height: 46px; padding-top: 8px; gap: 15px; box-sizing: border-box; }
.sysnav { height: 120px; background: #fcfcfc; }
</style>
